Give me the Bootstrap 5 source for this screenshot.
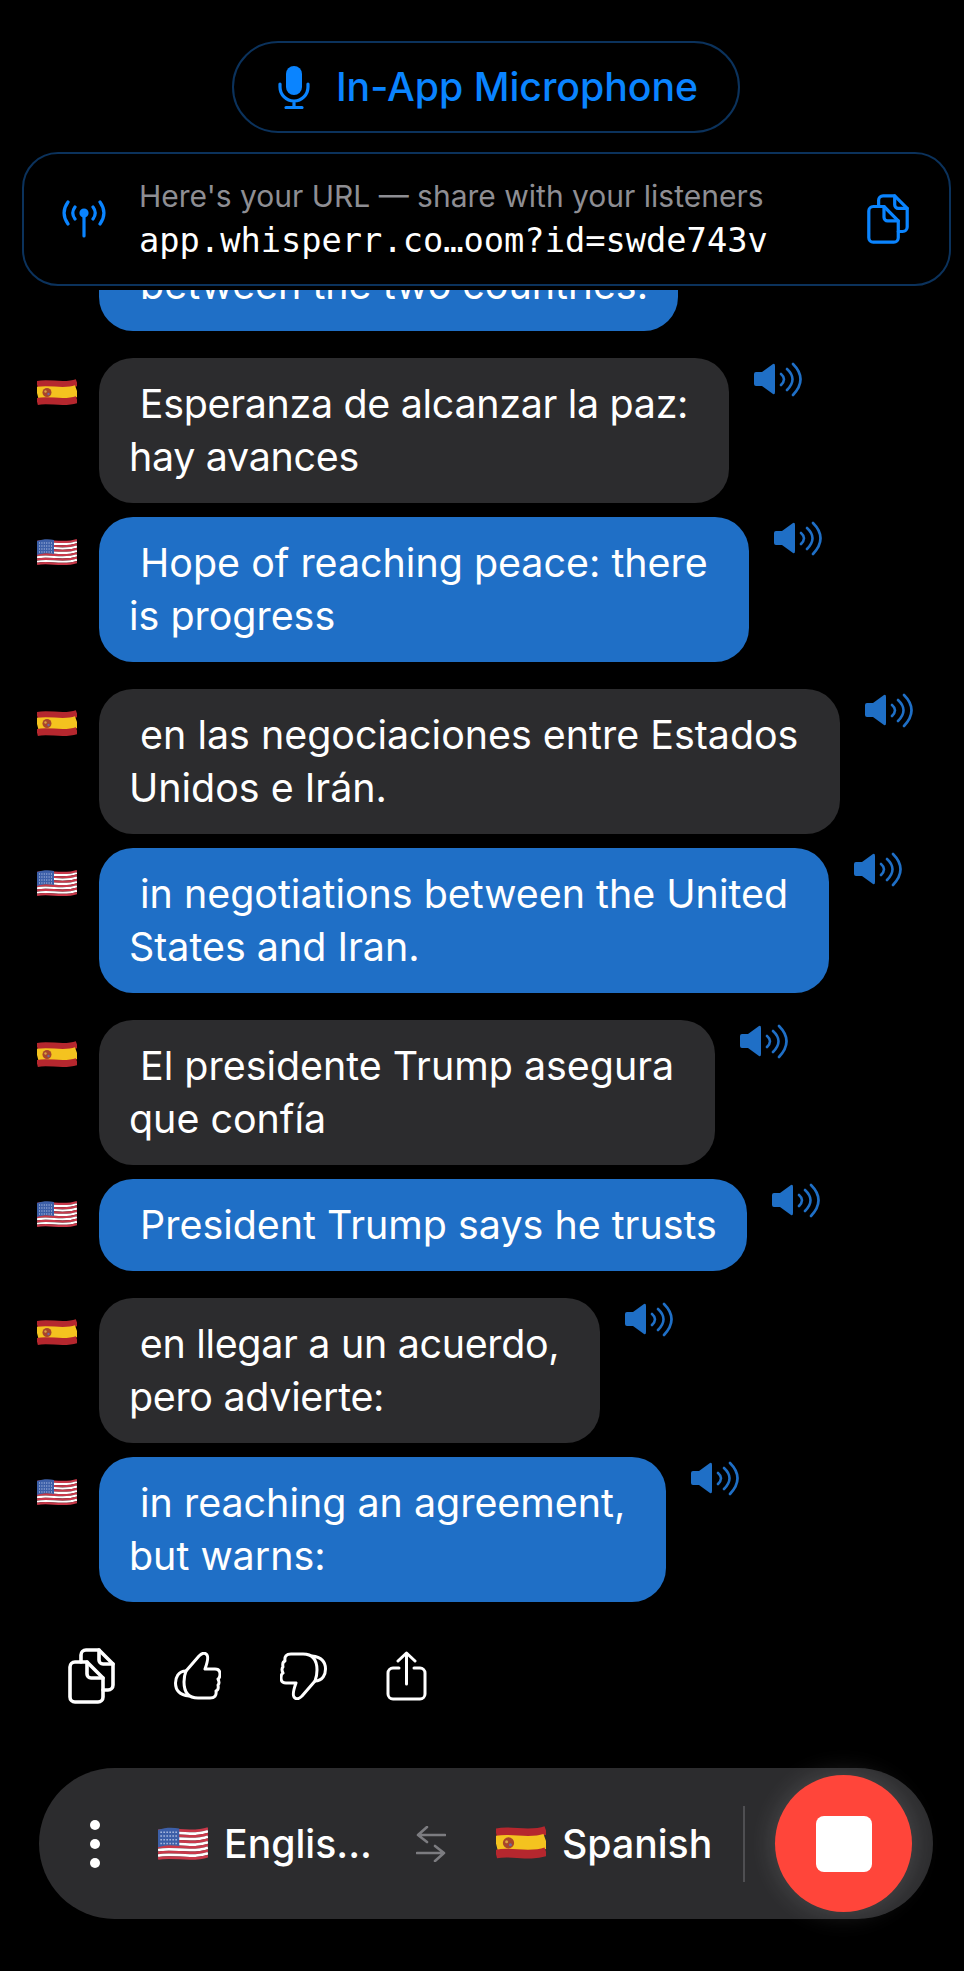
<!DOCTYPE html>
<html lang="en">
<head>
    <meta charset="UTF-8">
    <meta name="viewport" content="width=device-width, initial-scale=1.0">
    <title>Whisperr</title>
    <link href="https://cdn.jsdelivr.net/npm/bootstrap@5.3.3/dist/css/bootstrap.min.css" rel="stylesheet">
    <style>
        body { background: #000; color: #fff; font-family: "Inter", "Liberation Sans", sans-serif; }
        .app-shell { height: 1971px; }
        .top-area { padding: 41px 13px 4px 22px; background: #000; }
        .mic-pill { width: 508px; height: 92px; margin: 0 auto 19px 210px; padding-left: 4px; gap: 26px; border: 2px solid #0b325c; border-radius: 46px; color: #0a84ff; font-size: 39.2px; font-weight: 500; }
        .url-box { height: 134px; padding: 0 40px 0 38px; gap: 33px; border: 2px solid #0b325c; border-radius: 36px; color: #0a84ff; }
        .url-hint { color: #8e8e93; font-size: 30px; line-height: 40px; white-space: nowrap; }
        .url-link { margin-top: 4px; color: #fff; font-family: "DejaVu Sans Mono", "Liberation Mono", monospace; font-size: 33.7px; line-height: 42px; white-space: nowrap; }
        .chat-list { gap: 27px; margin-bottom: -1px; }
        .msg-pair { gap: 14px; }
        .chat-row { padding-left: 37px; }
        .flag-cell { width: 62px; padding-top: 21px; flex-shrink: 0; }
        .bubble { padding: 19.5px 30px; border-radius: 34px; font-size: 39.4px; line-height: 53px; white-space: pre; }
        .bubble-grey { background: #2c2c2e; }
        .bubble-blue { background: #1f6fc6; }
        .tight-text { letter-spacing: -.3px; }
        .speak-icon { margin: 4px 0 0 25px; color: #1f6fc6; flex-shrink: 0; }
        .action-row { padding: 47px 0 64px 68px; gap: 59px; color: #fff; }
        .lang-bar { height: 151px; margin: 0 31px 52px 39px; padding: 0 20px 0 51px; border-radius: 76px; background: #2c2c2e; }
        .dot-stack { gap: 9px; margin-right: 58px; }
        .dot-stack span { width: 10px; height: 10px; border-radius: 50%; background: #fff; }
        .lang-name { font-size: 39.2px; font-weight: 500; line-height: 1; }
        .flag-gap { margin-right: 16px; }
        .swap-icon { margin: 0 50px 0 44px; }
        .bar-divider { width: 2px; height: 76px; margin: 0 30px 0 31px; background: #4f4f52; }
        .stop-btn { width: 137px; height: 137px; border: 0; border-radius: 50%; background: #ff453a; box-shadow: 0 0 24px 4px rgba(255, 255, 255, .12); }
        .stop-btn span { width: 56px; height: 56px; border-radius: 8px; background: #fff; }
    </style>
</head>
<body>
    <!-- shared icons -->
    <svg width="0" height="0" class="position-absolute">
        <defs>
            <path id="wave" d="M0 0C12-3 26 3 40-2" fill="none"/>
            <symbol id="flag-es" viewBox="0 0 40 28">
                <use href="#wave" y="5.500" stroke="#b5272e" stroke-width="7"/>
                <use href="#wave" y="14" stroke="#f4c31f" stroke-width="12"/>
                <use href="#wave" y="22.500" stroke="#b5272e" stroke-width="7"/>
                <circle cx="10" cy="13.500" r="4.500" fill="#a8452c"/>
                <circle cx="8.500" cy="12.500" r="1.200" fill="#d9a441"/>
                <circle cx="11.500" cy="15" r="1.200" fill="#6d6a9c"/>
            </symbol>
            <symbol id="flag-us" viewBox="0 0 40 28">
                <use href="#wave" y="4" stroke="#c9394a" stroke-width="2.2"/>
                <use href="#wave" y="6.2" stroke="#fff" stroke-width="2.2"/>
                <use href="#wave" y="8.4" stroke="#c9394a" stroke-width="2.2"/>
                <use href="#wave" y="10.6" stroke="#fff" stroke-width="2.2"/>
                <use href="#wave" y="12.8" stroke="#c9394a" stroke-width="2.2"/>
                <use href="#wave" y="15" stroke="#fff" stroke-width="2.2"/>
                <use href="#wave" y="17.2" stroke="#c9394a" stroke-width="2.2"/>
                <use href="#wave" y="19.4" stroke="#fff" stroke-width="2.2"/>
                <use href="#wave" y="21.6" stroke="#c9394a" stroke-width="2.2"/>
                <use href="#wave" y="23.8" stroke="#fff" stroke-width="2.2"/>
                <use href="#wave" y="26" stroke="#c9394a" stroke-width="2.2"/>
                <path d="M0 3C6 1 12 1 17 2V16C12 15 6 15 0 17Z" fill="#3c5fa8"/>
                <path d="M2 5H16M2 8H16M2 11H16M2 14H16" stroke="#c5d2ee" stroke-width="1.1" stroke-dasharray="1 1.4"/>
            </symbol>
            <symbol id="ico-speaker" viewBox="0 0 48 35">
                <path d="M0 12Q0 10 2 10H8L19 2Q21 1 21 4V30Q21 33 19 32L8 24H2Q0 24 0 22Z" fill="currentColor"/>
                <path d="M27 12Q33 17 27 23M33 7Q44 17 33 28M39 2Q54 17 39 33" fill="none" stroke="currentColor" stroke-width="2.6" stroke-linecap="round"/>
            </symbol>
            <symbol id="ico-copy" viewBox="0 0 47 56">
                <g fill="none" stroke="currentColor" stroke-width="3.6" stroke-linejoin="round" stroke-linecap="round">
                    <path d="M7 14H19L35 30V49A5 5 0 0 1 30 54H7A5 5 0 0 1 2 49V19A5 5 0 0 1 7 14Z"/>
                    <path d="M19 14V26A4 4 0 0 0 23 30H35"/>
                    <path d="M13 14V7A5 5 0 0 1 18 2H31L45 16V37A5 5 0 0 1 40 42H35"/>
                    <path d="M31 2V12A4 4 0 0 0 35 16H45"/>
                </g>
            </symbol>
            <symbol id="ico-thumb" viewBox="0 0 47 48">
                <g fill="none" stroke="#fff" stroke-width="3" stroke-linejoin="round" stroke-linecap="round">
                    <path d="M12 19L25 4Q30-1 33 3Q35 6 31 17H41Q46 17 46 22Q46 26 44 27Q46 31 44 33Q45 38 42 39Q43 46 36 46H24C14 46 10 40 10 30Q10 24 12 19Z"/>
                    <path d="M12 19C4 19 1.500 26 1.500 31C1.500 38 6 43 15 44"/>
                </g>
            </symbol>
        </defs>
    </svg>

    <div class="app-shell d-flex flex-column overflow-hidden">
        <div class="top-area position-relative z-1">
            <div class="mic-pill d-flex align-items-center justify-content-center">
                <svg width="32" height="43" viewBox="0 0 32 43" fill="none">
                    <rect x="8" y="0" width="16" height="29" rx="8" fill="#0a84ff"/>
                    <path d="M2 18V21A14 14 0 0 0 30 21V18M16 35V41M8 41.500H24" stroke="#0a84ff" stroke-width="3.2" stroke-linecap="round"/>
                </svg>
                <span>In-App Microphone</span>
            </div>
            <div class="url-box d-flex align-items-center">
                <svg width="44" height="38" viewBox="0 0 44 38" fill="none" stroke="#0a84ff" stroke-width="3.2" stroke-linecap="round" class="flex-shrink-0">
                    <path d="M6 2C1 9 1 17 6 24M38 2C43 9 43 17 38 24M13 7C10 11 10 15 13 19M31 7C34 11 34 15 31 19M22 13V36"/>
                    <circle cx="22" cy="13" r="3" fill="#0a84ff"/>
                </svg>
                <div class="flex-grow-1">
                    <div class="url-hint">Here's your URL — share with your listeners</div>
                    <div class="url-link">app.whisperr.co…oom?id=swde743v</div>
                </div>
                <svg width="42" height="50" class="flex-shrink-0"><use href="#ico-copy"/></svg>
            </div>
        </div>

        <div class="chat-list flex-grow-1 overflow-hidden d-flex flex-column justify-content-end">
            <div class="chat-row d-flex">
                <div class="flag-cell"><svg width="40" height="28"><use href="#flag-us"/></svg></div>
                <div class="bubble bubble-blue"> between the two countries.</div>
                <svg class="speak-icon" width="48" height="35"><use href="#ico-speaker"/></svg>
            </div>
            <div class="msg-pair d-flex flex-column">
                <div class="chat-row d-flex">
                    <div class="flag-cell"><svg width="40" height="28"><use href="#flag-es"/></svg></div>
                    <div class="bubble bubble-grey tight-text"> Esperanza de alcanzar la paz: <br>hay avances</div>
                    <svg class="speak-icon" width="48" height="35"><use href="#ico-speaker"/></svg>
                </div>
                <div class="chat-row d-flex">
                    <div class="flag-cell"><svg width="40" height="28"><use href="#flag-us"/></svg></div>
                    <div class="bubble bubble-blue"> Hope of reaching peace: there <br>is progress</div>
                    <svg class="speak-icon" width="48" height="35"><use href="#ico-speaker"/></svg>
                </div>
            </div>
            <div class="msg-pair d-flex flex-column">
                <div class="chat-row d-flex">
                    <div class="flag-cell"><svg width="40" height="28"><use href="#flag-es"/></svg></div>
                    <div class="bubble bubble-grey"> en las negociaciones entre Estados <br>Unidos e Irán.</div>
                    <svg class="speak-icon" width="48" height="35"><use href="#ico-speaker"/></svg>
                </div>
                <div class="chat-row d-flex">
                    <div class="flag-cell"><svg width="40" height="28"><use href="#flag-us"/></svg></div>
                    <div class="bubble bubble-blue"> in negotiations between the United <br>States and Iran.</div>
                    <svg class="speak-icon" width="48" height="35"><use href="#ico-speaker"/></svg>
                </div>
            </div>
            <div class="msg-pair d-flex flex-column">
                <div class="chat-row d-flex">
                    <div class="flag-cell"><svg width="40" height="28"><use href="#flag-es"/></svg></div>
                    <div class="bubble bubble-grey"> El presidente Trump asegura <br>que confía</div>
                    <svg class="speak-icon" width="48" height="35"><use href="#ico-speaker"/></svg>
                </div>
                <div class="chat-row d-flex">
                    <div class="flag-cell"><svg width="40" height="28"><use href="#flag-us"/></svg></div>
                    <div class="bubble bubble-blue"> President Trump says he trusts</div>
                    <svg class="speak-icon" width="48" height="35"><use href="#ico-speaker"/></svg>
                </div>
            </div>
            <div class="msg-pair d-flex flex-column">
                <div class="chat-row d-flex">
                    <div class="flag-cell"><svg width="40" height="28"><use href="#flag-es"/></svg></div>
                    <div class="bubble bubble-grey tight-text"> en llegar a un acuerdo, <br>pero advierte:</div>
                    <svg class="speak-icon" width="48" height="35"><use href="#ico-speaker"/></svg>
                </div>
                <div class="chat-row d-flex">
                    <div class="flag-cell"><svg width="40" height="28"><use href="#flag-us"/></svg></div>
                    <div class="bubble bubble-blue"> in reaching an agreement, <br>but warns:</div>
                    <svg class="speak-icon" width="48" height="35"><use href="#ico-speaker"/></svg>
                </div>
            </div>
        </div>

        <div class="action-row d-flex align-items-center">
            <svg width="47" height="56"><use href="#ico-copy"/></svg>
            <svg width="47" height="48"><use href="#ico-thumb"/></svg>
            <svg width="47" height="48" viewBox="0 0 47 48"><g transform="rotate(180 23.500 24)"><use href="#ico-thumb" width="47" height="48"/></g></svg>
            <svg width="41" height="50" viewBox="0 0 41 50" fill="none" stroke="#fff" stroke-width="3" stroke-linecap="round" stroke-linejoin="round">
                <path d="M13 17H7A5 5 0 0 0 2 22V43A5 5 0 0 0 7 48H34A5 5 0 0 0 39 43V22A5 5 0 0 0 34 17H28M20.500 33V2M12 10L20.500 2L29 10"/>
            </svg>
        </div>

        <div class="lang-bar d-flex align-items-center flex-shrink-0">
            <div class="dot-stack d-flex flex-column"><span></span><span></span><span></span></div>
            <svg width="50" height="35" class="flex-shrink-0 flag-gap"><use href="#flag-us"/></svg>
            <span class="lang-name">Englis...</span>
            <svg class="swap-icon flex-shrink-0" width="30" height="36" viewBox="0 0 30 36" fill="none" stroke="#7c7c80" stroke-width="2.600" stroke-linecap="round" stroke-linejoin="round">
                <path d="M29 9H2M11 1L2 9L11 16M1 27H28M19 20L28 27L19 35"/>
            </svg>
            <svg width="50" height="35" class="flex-shrink-0 flag-gap"><use href="#flag-es"/></svg>
            <span class="lang-name">Spanish</span>
            <span class="bar-divider flex-shrink-0"></span>
            <button class="stop-btn d-flex align-items-center justify-content-center flex-shrink-0" type="button"><span></span></button>
        </div>
    </div>
</body>
</html>
